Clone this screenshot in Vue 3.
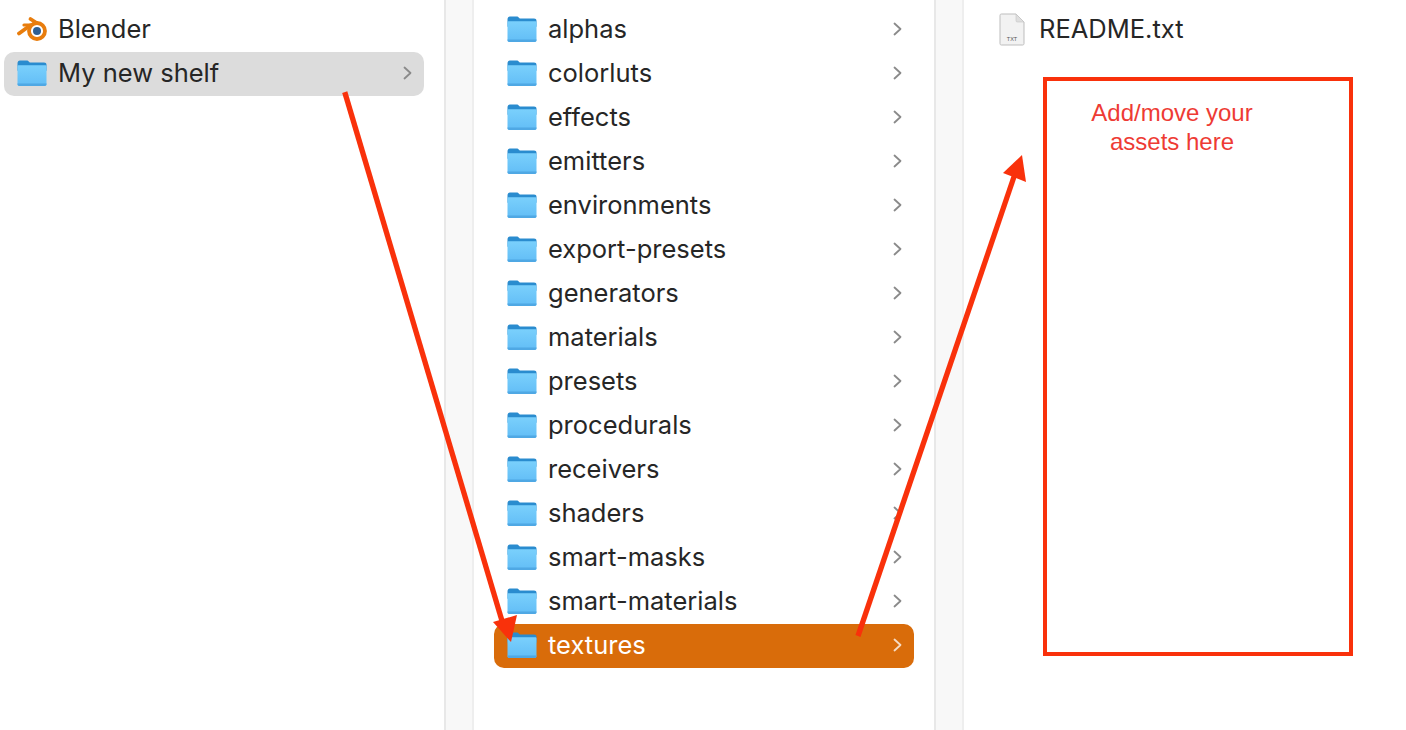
<script setup>
const shelves = [
  { name: 'Blender', icon: 'blender' },
  { name: 'My new shelf', icon: 'folder', chevron: true, state: 'grey' },
]

const folders = [
  'alphas', 'colorluts', 'effects', 'emitters', 'environments', 'export-presets', 'generators',
  'materials', 'presets', 'procedurals', 'receivers', 'shaders', 'smart-masks', 'smart-materials', 'textures',
]
</script>

<template>
  <div class="finder">
    <svg width="0" height="0" class="defs">
      <defs>
        <linearGradient id="folderFront" x1="0" y1="0" x2="0" y2="1">
          <stop offset="0" stop-color="#7ad0fc" />
          <stop offset="1" stop-color="#62bdf6" />
        </linearGradient>
        <symbol id="folder" viewBox="0 0 30 28">
          <path d="M.5 4.500C.5 2.500 1.500 1.500 3 1.500H9.500c1.200 0 1.800.4 2.500 1.200l.8.8H27c1.500 0 2.500.9 2.500 2.200v6H.5z" fill="#2a8ccf" />
          <path d="M.5 7.600c0-.9.6-1.400 1.400-1.400h26.200c.8 0 1.400.5 1.400 1.400V25c0 1.200-.7 2-2 2H2.500c-1.300 0-2-.8-2-2z" fill="url(#folderFront)" />
          <path d="M.5 24.400h29V25c0 1.200-.7 2-2 2H2.500c-1.300 0-2-.8-2-2z" fill="#4fa8e4" />
        </symbol>
      </defs>
    </svg>

    <section class="column first">
      <div v-for="s in shelves" :key="s.name" class="row" :class="{ grey: s.state === 'grey' }">
        <svg v-if="s.icon === 'blender'" class="icon" viewBox="0 0 30 28">
          <g fill="none" stroke="#e87d0d" stroke-linecap="round">
            <path d="M13.500 4 22 9.500" stroke-width="3.800" />
            <path d="M7 10h9" stroke-width="3.200" />
            <path d="M2 18.500 13 10.500" stroke-width="3.800" />
          </g>
          <circle cx="20" cy="16" r="8" fill="#fff" stroke="#e87d0d" stroke-width="3.800" />
          <circle cx="20" cy="16" r="4" fill="#2e5f93" />
        </svg>
        <svg v-else class="icon"><use href="#folder" /></svg>
        <span class="name">{{ s.name }}</span>
        <svg v-if="s.chevron" class="chevron" viewBox="0 0 10 14"><path d="M2.500 1.500 8.500 7l-6 5.500" /></svg>
      </div>
    </section>

    <div class="gutter"></div>

    <section class="column middle">
      <div v-for="f in folders" :key="f" class="row" :class="{ active: f === 'textures' }">
        <svg class="icon"><use href="#folder" /></svg>
        <span class="name">{{ f }}</span>
        <svg class="chevron" viewBox="0 0 10 14"><path d="M2.500 1.500 8.500 7l-6 5.500" /></svg>
      </div>
    </section>

    <div class="gutter"></div>

    <section class="column last">
      <div class="row">
        <svg class="icon file" viewBox="0 0 26 33">
          <path d="M2.500 1h14.500L25 9v21.500c0 1-.6 1.500-1.500 1.500h-21C1.500 32 1 31.500 1 30.500V2.500C1 1.500 1.500 1 2.500 1z" fill="#f2f2f2" stroke="#bdbdbd" />
          <path d="M17 1v6.500c0 1 .6 1.500 1.500 1.500H25z" fill="#dedede" stroke="#c4c4c4" stroke-width=".6" />
          <text x="13" y="27.500" text-anchor="middle" class="file-ext">TXT</text>
        </svg>
        <span class="name">README.txt</span>
      </div>
    </section>

    <div class="note">
      <p>Add/move your<br />assets here</p>
    </div>

    <svg class="arrows" viewBox="0 0 1406 730">
      <g fill="#f9310b">
        <path d="M342.200 92.900 347.300 91.300 506 625 500.900 626.400z" />
        <path d="M511 642 493 622 517 615z" />
        <path d="M855.500 634.900 860.500 636.900 1017 176 1012 174.400z" />
        <path d="M1022 155 1003 173 1026 182z" />
      </g>
    </svg>
  </div>
</template>

<style>
html, body {
  margin: 0;
  background: #fff;
  overflow: hidden;
}
</style>

<style scoped>
.finder {
  position: relative;
  display: flex;
  width: 1406px;
  height: 730px;
  overflow: hidden;
  background: #fff;
  font-family: Inter, "Liberation Sans", sans-serif;
  color: #262626;
}

.defs {
  position: absolute;
}

.column {
  box-sizing: border-box;
  padding-top: 8px;
  flex: none;
}

.first {
  width: 444px;
  padding-left: 4px;
  padding-right: 20px;
}

.middle {
  width: 460px;
  padding-left: 20px;
  padding-right: 20px;
}

.last {
  flex: 1;
  padding-left: 22px;
}

.gutter {
  flex: none;
  width: 26px;
  background: #f8f8f8;
  border-left: 2px solid #e8e8e8;
  border-right: 2px solid #eeeeee;
}

.row {
  box-sizing: border-box;
  display: flex;
  align-items: center;
  height: 44px;
  padding: 0 12px 2px 13px;
  border-radius: 10px;
}

.grey {
  background: #dcdcdc;
}

.active {
  background: #d96c0a;
  color: #fff;
}

.icon {
  flex: none;
  width: 30px;
  height: 28px;
  margin-right: 11px;
}

.file {
  width: 26px;
  height: 33px;
  margin-right: 14px;
}

.file-ext {
  font-size: 5.500px;
  font-family: "Liberation Sans", sans-serif;
  fill: #555;
}

.name {
  flex: 1;
  font-size: 25.500px;
  line-height: 42px;
  white-space: nowrap;
}

.chevron {
  flex: none;
  width: 10px;
  height: 14px;
  fill: none;
  stroke: #8a8a8a;
  stroke-width: 1.800;
  stroke-linecap: round;
  stroke-linejoin: round;
}

.active .chevron {
  stroke: #f6dcc4;
}

.note {
  position: absolute;
  left: 1043px;
  top: 77px;
  box-sizing: border-box;
  width: 310px;
  height: 579px;
  border: 4px solid #f9310b;
}

.note p {
  margin: 0;
  position: absolute;
  left: 25px;
  top: 18px;
  width: 200px;
  text-align: center;
  font-family: "Liberation Sans", sans-serif;
  font-size: 24px;
  line-height: 28.500px;
  color: #ee3b34;
}

.arrows {
  position: absolute;
  left: 0;
  top: 0;
  width: 1406px;
  height: 730px;
  pointer-events: none;
}
</style>
